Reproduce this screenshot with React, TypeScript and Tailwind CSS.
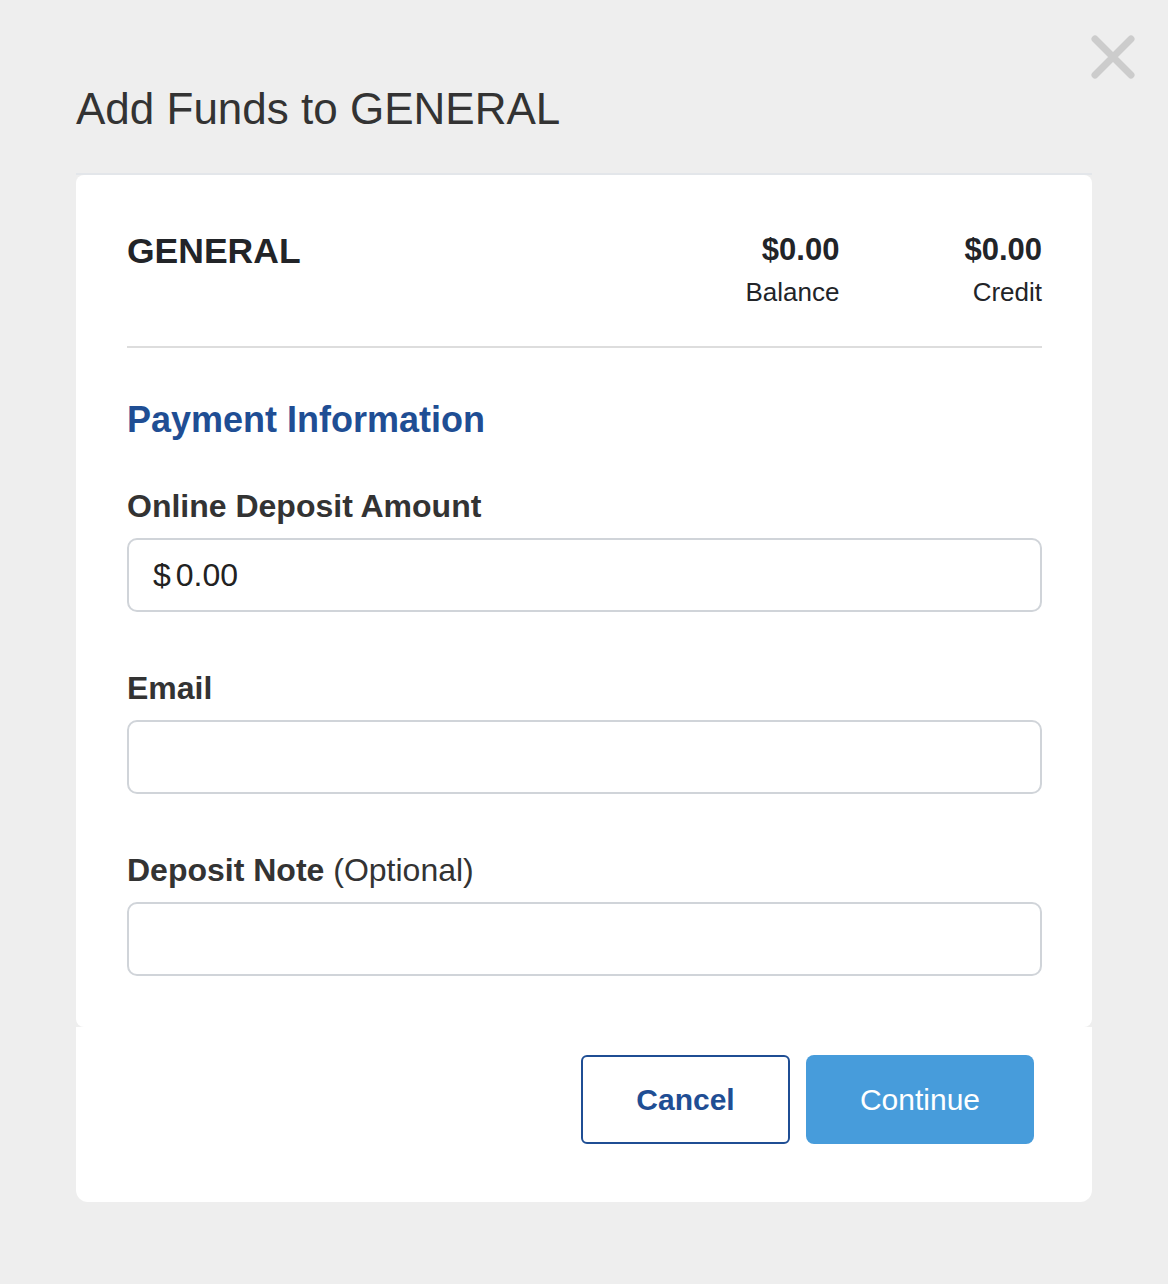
import React from 'react';

const font = { fontFamily: '"Liberation Sans", Arial, Helvetica, sans-serif' };

const CloseIcon = () => (
  <svg width="44" height="44" viewBox="0 0 44 44" fill="none">
    <path
      d="M4 4 L40 40 M40 4 L4 40"
      stroke="#cccccc"
      strokeWidth="7"
      strokeLinecap="round"
    />
  </svg>
);

const Field = ({
  label,
  hint,
  first,
  children,
}: {
  label: string;
  hint?: string;
  first?: boolean;
  children?: React.ReactNode;
}) => (
  <div className={first ? 'mt-[52px]' : 'mt-[60px]'}>
    <p className="text-[32px] leading-none font-bold text-[#333333]">
      {label}
      {hint && <span className="font-normal"> {hint}</span>}
    </p>
    <div className="mt-[16px] h-[74px] rounded-[10px] border-2 border-[#d0d4d9] bg-white flex items-center px-[24px]">
      {children}
    </div>
  </div>
);

const App = () => {
  return (
    <div className="relative min-h-screen bg-[#eeeeee] px-[76px] pt-[87px]" style={font}>
      <button className="absolute top-[35px] left-[1091px]" aria-label="Close">
        <CloseIcon />
      </button>

      <h1 className="text-[44px] leading-none text-[#333333]">Add Funds to GENERAL</h1>

      <div className="mt-[42px] border-t-2 border-[#e3e6ea]">
        {/* body */}
        <div className="bg-white rounded-lg pl-[51px] pr-[50px] pt-[59px] pb-[51px]">
          <div className="flex items-start justify-between border-b-2 border-[#dddddd] pb-[41px]">
            <p className="text-[35.5px] leading-none font-bold text-[#222428]">GENERAL</p>
            <div className="flex gap-[125px]">
              <div className="text-right">
                <p className="text-[31px] leading-none font-bold text-[#222428]">$0.00</p>
                <p className="mt-[14px] text-[26px] leading-none text-[#222428]">Balance</p>
              </div>
              <div className="text-right">
                <p className="text-[31px] leading-none font-bold text-[#222428]">$0.00</p>
                <p className="mt-[14px] text-[26px] leading-none text-[#222428]">Credit</p>
              </div>
            </div>
          </div>

          <h2 className="mt-[54px] text-[36px] leading-none font-bold text-[#1f4e94]">
            Payment Information
          </h2>

          <Field label="Online Deposit Amount" first>
            <span className="text-[32px] text-[#222222]">$</span>
            <input
              className="ml-[5px] flex-1 text-[32px] text-[#222222] outline-none bg-transparent"
              style={font}
              defaultValue="0.00"
            />
          </Field>
          <Field label="Email">
            <input className="flex-1 text-[32px] outline-none bg-transparent" style={font} />
          </Field>
          <Field label="Deposit Note" hint="(Optional)">
            <input className="flex-1 text-[32px] outline-none bg-transparent" style={font} />
          </Field>
        </div>

        {/* footer */}
        <div className="bg-white rounded-b-xl pt-[28px] pb-[58px] pr-[58px] flex justify-end gap-[16px]">
          <button
            className="w-[209px] h-[89px] rounded-[6px] border-2 border-[#1f4e94] bg-white text-[30px] font-bold text-[#1f4e94]"
            style={font}
          >
            Cancel
          </button>
          <button
            className="w-[228px] h-[89px] rounded-[8px] bg-[#479cdb] text-[30px] text-white"
            style={font}
          >
            Continue
          </button>
        </div>
      </div>
    </div>
  );
};

export default App;
